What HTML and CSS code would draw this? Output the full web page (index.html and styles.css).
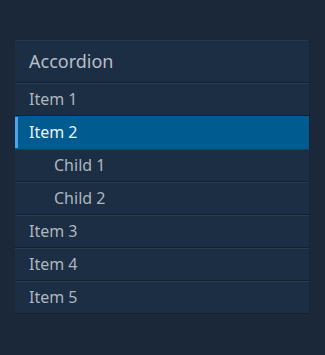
FILE: index.html
```html
<!DOCTYPE html>
<html>
<head>
<meta charset="utf-8">
<link rel="stylesheet" href="styles.css">
</head>
<body>
<div class="accordion">
  <div class="header">Accordion</div>
  <div class="row">Item 1</div>
  <div class="row selected">Item 2</div>
  <div class="row child">Child 1</div>
  <div class="row child">Child 2</div>
  <div class="row">Item 3</div>
  <div class="row">Item 4</div>
  <div class="row">Item 5</div>
</div>
</body>
</html>
```
FILE: styles.css
```css
html, body {
  margin: 0;
  padding: 0;
  background: #1b2839;
}
body {
  padding: 40px 0 0 15px;
  font-family: "Noto Sans", "Open Sans", sans-serif;
}
.accordion {
  width: 294px;
  background: #1c2e44;
  border-right: 1px solid #16233a;
  display: flex;
  flex-direction: column;
}
.header {
  height: 40px;
  padding-bottom: 1px;
  border-top: 1px solid #25374c;
  border-bottom: 1px solid #132030;
  display: flex;
  align-items: center;
  padding-left: 14px;
  font-size: 18px;
  color: #b6bfc8;
}
.row {
  height: 30px;
  padding-bottom: 1px;
  border-top: 1px solid #2a3c51;
  border-bottom: 1px solid #132030;
  display: flex;
  align-items: center;
  padding-left: 14px;
  font-size: 16px;
  color: #adb6bf;
}
.row.child {
  padding-left: 39px;
}
.row.selected {
  background: #005b91;
  border-top-color: #005b91;
  border-bottom-color: #005b91;
  box-shadow: inset 3px 0 0 #4ba6ee;
  color: #eef3f7;
}
```
